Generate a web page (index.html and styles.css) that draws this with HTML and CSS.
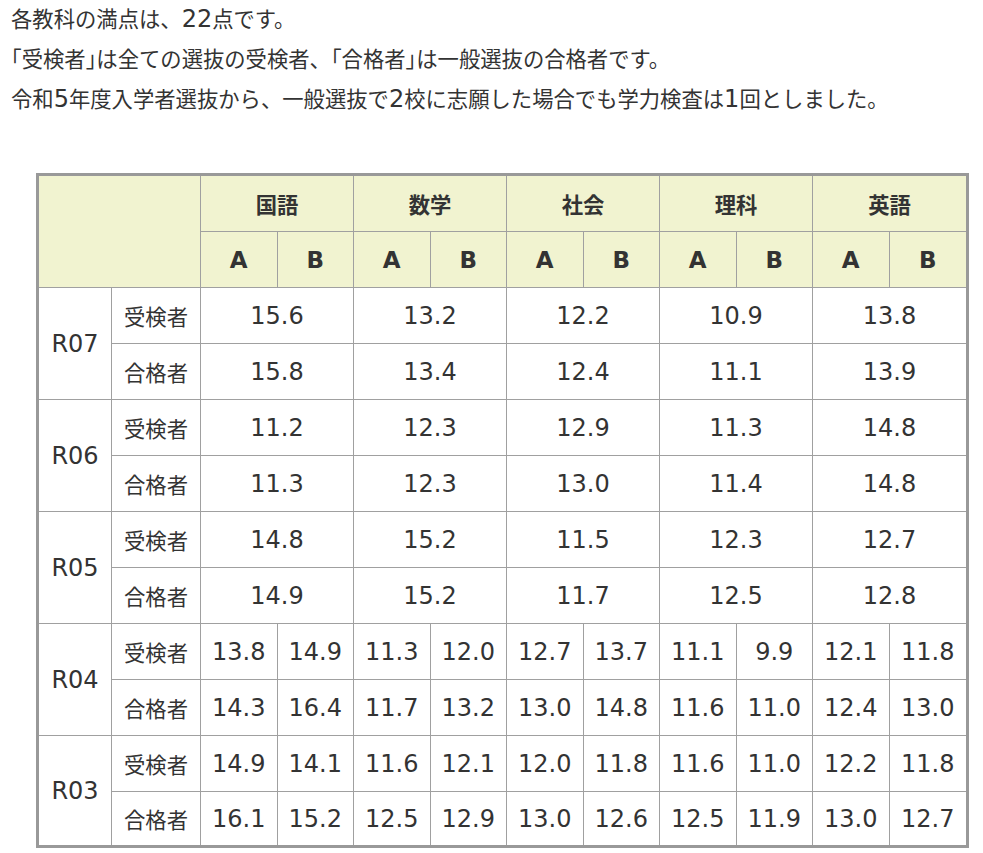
FILE: index.html
```html
<!DOCTYPE html>
<html lang="ja">
<head>
<meta charset="utf-8">
<title>学力検査 平均点</title>
<link rel="stylesheet" href="styles.css">
</head>
<body>
<div class="notes">
  <p>各教科の満点は、<span class="num">22</span>点です。</p>
  <p>｢受検者｣は全ての選抜の受検者、｢合格者｣は一般選抜の合格者です。</p>
  <p>令和<span class="num">5</span>年度入学者選抜から、一般選抜で<span class="num">2</span>校に志願した場合でも学力検査は<span class="num">1</span>回としました。</p>
</div>
<table class="scores">
  <colgroup>
    <col class="c-year"><col class="c-label">
    <col><col><col><col><col><col><col><col><col><col>
  </colgroup>
  <thead>
    <tr class="h1">
      <th colspan="2" rowspan="2"></th>
      <th colspan="2">国語</th>
      <th colspan="2">数学</th>
      <th colspan="2">社会</th>
      <th colspan="2">理科</th>
      <th colspan="2" class="end">英語</th>
    </tr>
    <tr class="h2">
      <th>A</th><th>B</th><th>A</th><th>B</th><th>A</th><th>B</th><th>A</th><th>B</th><th>A</th><th class="end">B</th>
    </tr>
  </thead>
  <tbody>
    <tr><td rowspan="2" class="year">R07</td><td class="label">受検者</td><td colspan="2">15.6</td><td colspan="2">13.2</td><td colspan="2">12.2</td><td colspan="2">10.9</td><td colspan="2" class="end">13.8</td></tr>
    <tr><td class="label">合格者</td><td colspan="2">15.8</td><td colspan="2">13.4</td><td colspan="2">12.4</td><td colspan="2">11.1</td><td colspan="2" class="end">13.9</td></tr>
    <tr><td rowspan="2" class="year">R06</td><td class="label">受検者</td><td colspan="2">11.2</td><td colspan="2">12.3</td><td colspan="2">12.9</td><td colspan="2">11.3</td><td colspan="2" class="end">14.8</td></tr>
    <tr><td class="label">合格者</td><td colspan="2">11.3</td><td colspan="2">12.3</td><td colspan="2">13.0</td><td colspan="2">11.4</td><td colspan="2" class="end">14.8</td></tr>
    <tr><td rowspan="2" class="year">R05</td><td class="label">受検者</td><td colspan="2">14.8</td><td colspan="2">15.2</td><td colspan="2">11.5</td><td colspan="2">12.3</td><td colspan="2" class="end">12.7</td></tr>
    <tr><td class="label">合格者</td><td colspan="2">14.9</td><td colspan="2">15.2</td><td colspan="2">11.7</td><td colspan="2">12.5</td><td colspan="2" class="end">12.8</td></tr>
    <tr><td rowspan="2" class="year">R04</td><td class="label">受検者</td><td>13.8</td><td>14.9</td><td>11.3</td><td>12.0</td><td>12.7</td><td>13.7</td><td>11.1</td><td>9.9</td><td>12.1</td><td class="end">11.8</td></tr>
    <tr><td class="label">合格者</td><td>14.3</td><td>16.4</td><td>11.7</td><td>13.2</td><td>13.0</td><td>14.8</td><td>11.6</td><td>11.0</td><td>12.4</td><td class="end">13.0</td></tr>
    <tr><td rowspan="2" class="year last">R03</td><td class="label">受検者</td><td>14.9</td><td>14.1</td><td>11.6</td><td>12.1</td><td>12.0</td><td>11.8</td><td>11.6</td><td>11.0</td><td>12.2</td><td class="end">11.8</td></tr>
    <tr class="last-row"><td class="label">合格者</td><td>16.1</td><td>15.2</td><td>12.5</td><td>12.9</td><td>13.0</td><td>12.6</td><td>12.5</td><td>11.9</td><td>13.0</td><td class="end">12.7</td></tr>
  </tbody>
</table>
</body>
</html>
```

FILE: styles.css
```css
html, body {
  margin: 0;
  padding: 0;
  background: #fff;
}

body {
  font-family: "Noto Sans CJK JP", sans-serif;
  color: #333;
}

.notes {
  margin: -2px 0 0 11px;
  font-size: 21.33px;
  line-height: 40px;
}

.notes p {
  margin: 0;
  height: 40px;
}

.num {
  font-family: "DejaVu Sans", sans-serif;
  font-size: 24px;
  line-height: 1;
}

.scores {
  margin: 55px 0 0 36px;
  width: 933px;
  table-layout: fixed;
  border-collapse: separate;
  border-spacing: 0;
  border: 3px solid #999;
  font-family: "DejaVu Sans", "Noto Sans CJK JP", sans-serif;
  font-size: 24px;
}

.c-year { width: 73px; }
.c-label { width: 89px; }

.scores th,
.scores td {
  box-sizing: border-box;
  height: 56px;
  padding: 0;
  text-align: center;
  vertical-align: middle;
  border-right: 1px solid #a0a0a0;
  border-bottom: 1px solid #a0a0a0;
  white-space: nowrap;
}

.scores th {
  background: #f1f3d0;
  font-weight: bold;
}

.scores .h1 th {
  font-family: "Noto Sans CJK JP", sans-serif;
  font-size: 21.33px;
}

.scores .h2 th {
  font-size: 23px;
}

.scores td.label {
  font-family: "Noto Sans CJK JP", sans-serif;
  font-size: 21.33px;
}

.scores .end {
  border-right: none;
}

.scores td.year {
  height: auto;
}

.scores .last-row td,
.scores td.year.last {
  border-bottom: none;
}

.scores .last-row td {
  height: 53px;
}
```
